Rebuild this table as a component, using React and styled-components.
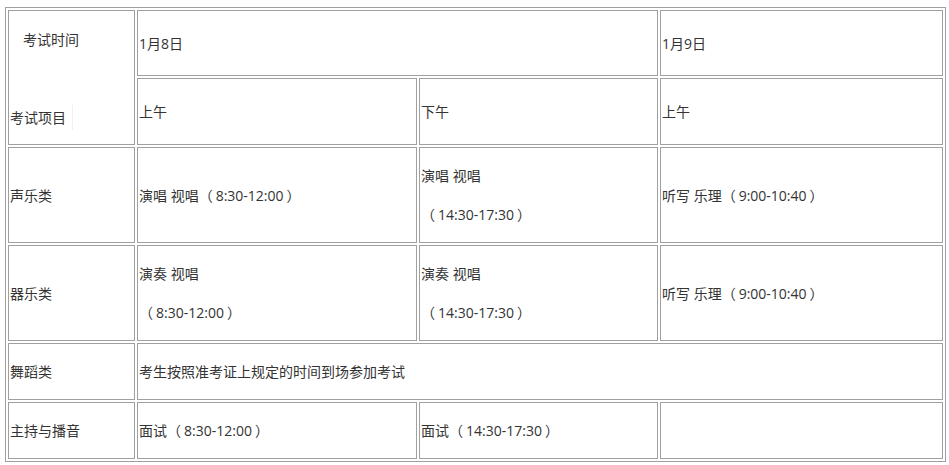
import React from "react";
import styled, { createGlobalStyle } from "styled-components";

const GlobalStyle = createGlobalStyle`
  html, body {
    margin: 0;
    padding: 0;
    background: #ffffff;
  }
  body {
    font-family: "Open Sans", "Noto Sans CJK SC", sans-serif;
    color: #333333;
  }
`;

const Page = styled("div")`
  padding: 7px 0 0 5px;
`;

const Table = styled("table")`
  border: 1px solid #a0a0a0;
  border-collapse: separate;
  border-spacing: 2px;
  table-layout: fixed;
  width: 941px;
  font-size: 14px;
  line-height: 25px;
`;

const Col = styled("col")`
  width: ${props => props.$w}px;
`;

const Row = styled("tr")`
  height: ${props => props.$h}px;
`;

const Cell = styled("td")`
  box-sizing: border-box;
  border: 1px solid #a0a0a0;
  padding: 0 1px;
  vertical-align: middle;
  text-align: left;
  white-space: nowrap;
`;

const Para = styled("p")`
  margin: 0;
  & + & {
    margin-top: 14px;
  }
`;

const Time = styled("span")`
  padding: 0 3px;
`;

const HeadBox = styled("div")`
  display: flex;
  flex-direction: column;
  align-items: flex-start;
  gap: 53px;
  padding-top: 2px;
`;

const HeadTop = styled("span")`
  padding-left: 13px;
`;

const HeadBottom = styled("span")`
  padding-right: 6px;
  border-right: 1px solid #f0f0f0;
`;

const Slot = ({ children }) => (
  <>
    （<Time>{children}</Time>）
  </>
);

const App = () => {
  return (
    <Page>
      <GlobalStyle />
      <Table>
        <colgroup>
          <Col $w={127} />
          <Col $w={280} />
          <Col $w={239} />
          <Col $w={283} />
        </colgroup>
        <tbody>
          <Row $h={66}>
            <Cell rowSpan={2}>
              <HeadBox>
                <HeadTop>考试时间</HeadTop>
                <HeadBottom>考试项目</HeadBottom>
              </HeadBox>
            </Cell>
            <Cell colSpan={2}>1月8日</Cell>
            <Cell>1月9日</Cell>
          </Row>
          <Row $h={67}>
            <Cell>上午</Cell>
            <Cell>下午</Cell>
            <Cell>上午</Cell>
          </Row>
          <Row $h={96}>
            <Cell>声乐类</Cell>
            <Cell>演唱 视唱<Slot>8:30-12:00</Slot></Cell>
            <Cell>
              <Para>演唱 视唱</Para>
              <Para><Slot>14:30-17:30</Slot></Para>
            </Cell>
            <Cell>听写 乐理<Slot>9:00-10:40</Slot></Cell>
          </Row>
          <Row $h={96}>
            <Cell>器乐类</Cell>
            <Cell>
              <Para>演奏 视唱</Para>
              <Para><Slot>8:30-12:00</Slot></Para>
            </Cell>
            <Cell>
              <Para>演奏 视唱</Para>
              <Para><Slot>14:30-17:30</Slot></Para>
            </Cell>
            <Cell>听写 乐理<Slot>9:00-10:40</Slot></Cell>
          </Row>
          <Row $h={57}>
            <Cell>舞蹈类</Cell>
            <Cell colSpan={3}>考生按照准考证上规定的时间到场参加考试</Cell>
          </Row>
          <Row $h={57}>
            <Cell>主持与播音</Cell>
            <Cell>面试<Slot>8:30-12:00</Slot></Cell>
            <Cell>面试<Slot>14:30-17:30</Slot></Cell>
            <Cell></Cell>
          </Row>
        </tbody>
      </Table>
    </Page>
  );
};

export default App;
